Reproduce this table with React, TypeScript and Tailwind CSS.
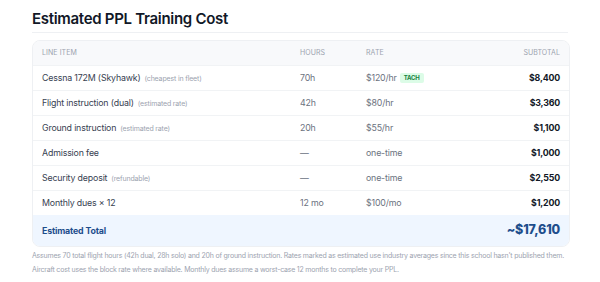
import React from "react";

type Row = {
  item: string;
  note?: string;
  hours: string;
  rate: string;
  tag?: string;
  subtotal: string;
};

const rows: Row[] = [
  { item: "Cessna 172M (Skyhawk)", note: "(cheapest in fleet)", hours: "70h", rate: "$120/hr", tag: "TACH", subtotal: "$8,400" },
  { item: "Flight instruction (dual)", note: "(estimated rate)", hours: "42h", rate: "$80/hr", subtotal: "$3,360" },
  { item: "Ground instruction", note: "(estimated rate)", hours: "20h", rate: "$55/hr", subtotal: "$1,100" },
  { item: "Admission fee", hours: "—", rate: "one-time", subtotal: "$1,000" },
  { item: "Security deposit", note: "(refundable)", hours: "—", rate: "one-time", subtotal: "$2,550" },
  { item: "Monthly dues × 12", hours: "12 mo", rate: "$100/mo", subtotal: "$1,200" },
];

const grid = "grid grid-cols-[258px_66px_1fr_auto] items-center px-[9px]";

export default function App() {
  return (
    <div className="w-[600px] h-[282px] bg-white px-[32px] pt-[10px] font-['Inter',sans-serif] tracking-[-0.01em]">
      <h2 className="text-[15px] font-semibold text-[#111827] leading-[18px] tracking-[-0.02em]">
        Estimated PPL Training Cost
      </h2>
      <div className="mt-[4px] h-px bg-[#eef0f3]" />

      <div className="mt-[7px] w-[538px] rounded-[8px] border border-[#eef0f3] overflow-hidden">
        {/* header */}
        <div className={`${grid} h-[24px] bg-[#f8f9fb] text-[7px] text-[#9ca3af] uppercase tracking-[0.01em]`}>
          <span>Line Item</span>
          <span>Hours</span>
          <span>Rate</span>
          <span className="text-right">Subtotal</span>
        </div>

        {rows.map((r) => (
          <div
            key={r.item}
            className={`${grid} h-[25px] border-t border-[#f1f3f5] text-[8.8px] text-[#374151]`}
          >
            <span>
              {r.item}
              {r.note && <span className="ml-[4px] text-[7px] text-[#9ca3af]">{r.note}</span>}
            </span>
            <span className="text-[#6b7280]">{r.hours}</span>
            <span className="flex items-center gap-[3px] text-[#6b7280]">
              {r.rate}
              {r.tag && (
                <span className="rounded-[2px] bg-[#dcfce7] px-[4px] py-[1px] text-[6px] font-bold text-[#15803d] leading-[8px]">
                  {r.tag}
                </span>
              )}
            </span>
            <span className="text-right font-bold text-[#111827]">{r.subtotal}</span>
          </div>
        ))}

        <div className={`${grid} h-[31px] bg-[#eff6ff] text-[#1e4e8c]`}>
          <span className="text-[8.8px] font-bold">Estimated Total</span>
          <span />
          <span />
          <span className="text-right text-[12.5px] font-extrabold">~$17,610</span>
        </div>
      </div>

      <p className="mt-[2px] text-[7px] leading-[14px] text-[#9ca3af] tracking-[-0.03em]">
        Assumes 70 total flight hours (42h dual, 28h solo) and 20h of ground instruction. Rates marked as estimated use industry averages since this school hasn't published them. Aircraft cost uses the block rate where available. Monthly dues assume a worst-case 12 months to complete your PPL.
      </p>
    </div>
  );
}
